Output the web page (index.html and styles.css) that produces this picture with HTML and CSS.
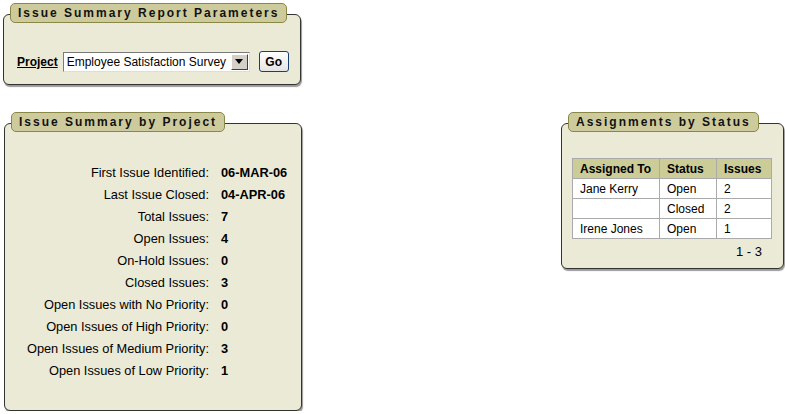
FILE: index.html
```html
<!DOCTYPE html>
<html lang="en">
<head>
    <meta charset="UTF-8">
    <title>Issue Summary by Project</title>
    <link rel="stylesheet" href="styles.css">
</head>
<body>
    <div class="region params-region">
        <div class="region-title">Issue Summary Report Parameters</div>
        <div class="region-body params-body">
            <label class="field-label" for="project">Project</label>
            <span class="select-wrap">
                <select id="project" class="project-select">
                    <option>Employee Satisfaction Survey</option>
                </select>
                <span class="select-arrow">
                    <svg width="8" height="5" viewBox="0 0 8 5"><polygon points="0,0 8,0 4,5" fill="#000"/></svg>
                </span>
            </span>
            <button class="go-btn">Go</button>
        </div>
    </div>

    <div class="region-row">
        <div class="region summary-region">
            <div class="region-title">Issue Summary by Project</div>
            <div class="region-body summary-body">
                <div class="summary-grid">
                    <span class="summary-label">First Issue Identified:</span><span class="summary-value">06-MAR-06</span>
                    <span class="summary-label">Last Issue Closed:</span><span class="summary-value">04-APR-06</span>
                    <span class="summary-label">Total Issues:</span><span class="summary-value">7</span>
                    <span class="summary-label">Open Issues:</span><span class="summary-value">4</span>
                    <span class="summary-label">On-Hold Issues:</span><span class="summary-value">0</span>
                    <span class="summary-label">Closed Issues:</span><span class="summary-value">3</span>
                    <span class="summary-label">Open Issues with No Priority:</span><span class="summary-value">0</span>
                    <span class="summary-label">Open Issues of High Priority:</span><span class="summary-value">0</span>
                    <span class="summary-label">Open Issues of Medium Priority:</span><span class="summary-value">3</span>
                    <span class="summary-label">Open Issues of Low Priority:</span><span class="summary-value">1</span>
                </div>
            </div>
        </div>

        <div class="region status-region">
            <div class="region-title">Assignments by Status</div>
            <div class="region-body status-body">
                <table class="report-table">
                    <thead>
                        <tr><th class="col-assigned">Assigned To</th><th class="col-status">Status</th><th>Issues</th></tr>
                    </thead>
                    <tbody>
                        <tr><td>Jane Kerry</td><td>Open</td><td>2</td></tr>
                        <tr><td></td><td>Closed</td><td>2</td></tr>
                        <tr><td>Irene Jones</td><td>Open</td><td>1</td></tr>
                    </tbody>
                </table>
                <div class="pagination">1 - 3</div>
            </div>
        </div>
    </div>
</body>
</html>
```
FILE: styles.css
```css
* {
    box-sizing: border-box;
}

body {
    margin: 0;
    padding: 14px 1px 0 3px;
    background: #fff;
    font-family: "Liberation Sans", Arial, sans-serif;
    font-size: 12px;
    color: #000;
}

.region {
    position: relative;
    background: #ebead6;
    border: 1px solid #333;
    border-radius: 6px;
    box-shadow: 1px 2px 1px #999;
}

/* tab sits over the top border */
.region-title {
    position: absolute;
    top: -12px;
    left: 6px;
    height: 20px;
    line-height: 18px;
    padding: 0 7px 0 7px;
    background: #cdcb9c;
    border: 1px solid #8a8848;
    border-radius: 5px;
    font-weight: bold;
    font-size: 12px;
    letter-spacing: 2px;
    white-space: nowrap;
    color: #111;
}

.params-region {
    width: 298px;
    height: 71px;
}

.params-body {
    display: flex;
    align-items: center;
    padding: 36px 0 0 13px;
}

.field-label {
    font-weight: bold;
    text-decoration: underline;
    margin-right: 5px;
}

.select-wrap {
    display: flex;
    width: 187px;
    height: 20px;
    background: #fff;
    border: 1px solid #7a7a7a;
    border-right-color: #ddd;
    border-bottom-color: #ddd;
    padding: 1px;
}

.project-select {
    flex: 1;
    min-width: 0;
    appearance: none;
    border: none;
    background: #fff;
    font-family: "Liberation Sans", Arial, sans-serif;
    font-size: 12px;
    padding: 0 2px;
    outline: none;
}

.select-arrow {
    width: 17px;
    display: flex;
    align-items: center;
    justify-content: center;
    background: #d4d0c8;
    border: 1px solid;
    border-color: #fff #404040 #404040 #fff;
}

.go-btn {
    margin-left: 9px;
    width: 30px;
    height: 21px;
    padding: 0;
    border: 1px solid #1c3f73;
    border-radius: 3px;
    background: linear-gradient(#fff, #e4e4e4);
    font-family: "Liberation Sans", Arial, sans-serif;
    font-weight: bold;
    font-size: 12px;
}

.region-row {
    display: flex;
    justify-content: space-between;
    align-items: flex-start;
    margin-top: 38px;
}

.summary-region {
    width: 298px;
    height: 288px;
    margin-left: 1px;
}

.summary-body {
    padding: 38px 0 0 0;
    font-size: 12.8px;
}

.summary-grid {
    display: grid;
    grid-template-columns: 204px auto;
    column-gap: 12px;
}

.summary-label {
    text-align: right;
    line-height: 22px;
    white-space: nowrap;
}

.summary-value {
    font-weight: bold;
    line-height: 22px;
}

.status-region {
    width: 223px;
    height: 146px;
}

.status-body {
    padding: 34px 11px 0 10px;
}

.report-table {
    width: 200px;
    border-collapse: collapse;
}

.report-table th,
.report-table td {
    height: 20px;
    border: 1px solid #aaa;
    padding: 0 0 0 7px;
    text-align: left;
    white-space: nowrap;
}

.report-table th {
    background: #cccc99;
    font-weight: bold;
}

.report-table td {
    background: #fff;
}

.col-assigned {
    width: 87px;
}

.col-status {
    width: 57px;
}

.pagination {
    text-align: right;
    padding: 5px 10px 0 0;
    font-size: 13px;
}
```
